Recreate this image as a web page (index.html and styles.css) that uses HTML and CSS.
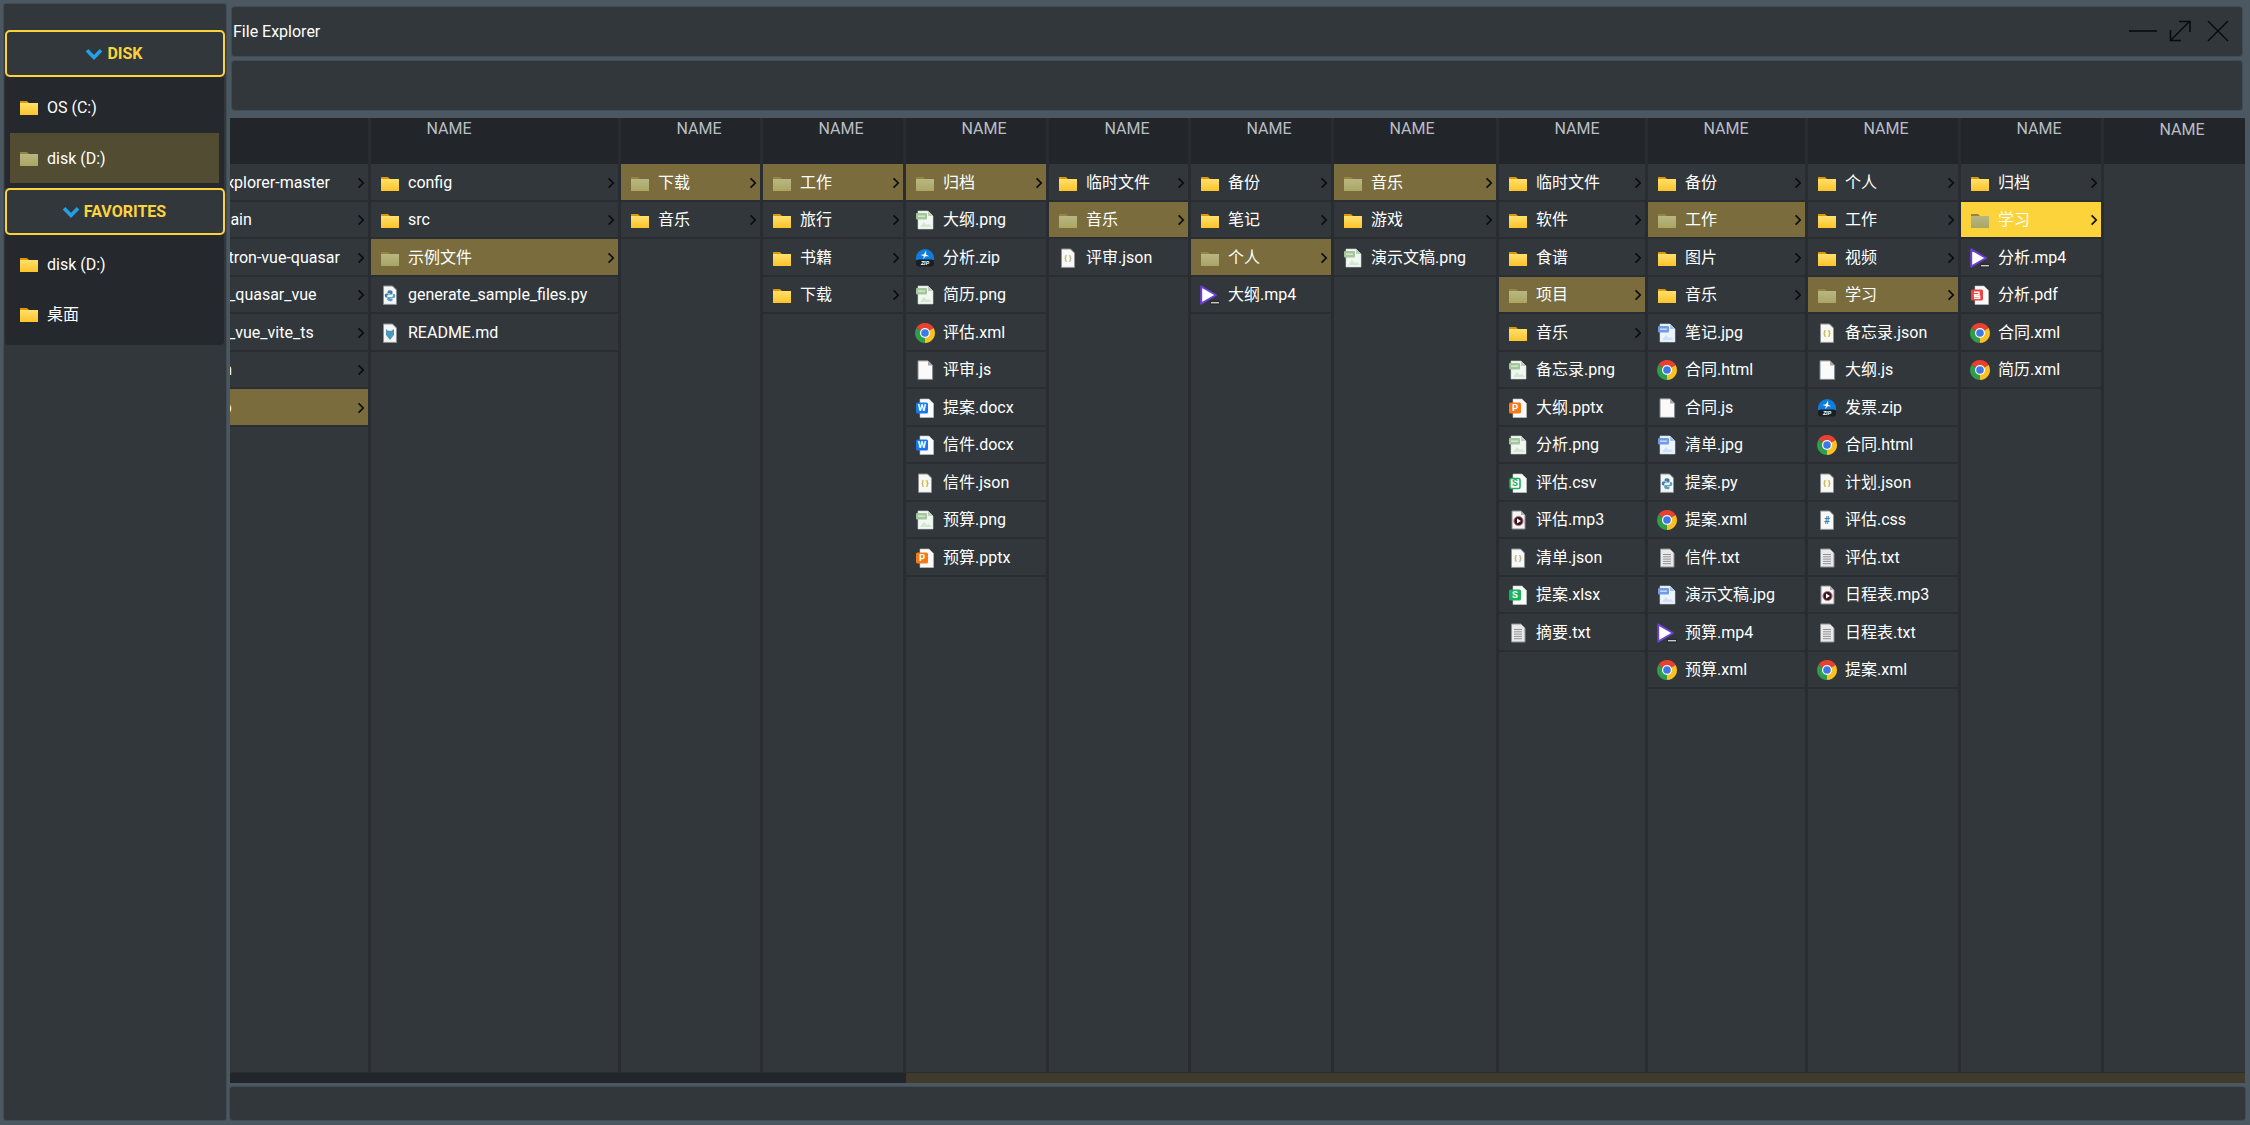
FILE: index.html
```html
<!DOCTYPE html>
<html lang="zh">
<head>
<meta charset="utf-8">
<title>File Explorer</title>
<link rel="stylesheet" href="styles.css">
</head>
<body>
<svg class="defs" aria-hidden="true">
  <defs>
    <linearGradient id="g-folder" x1="0" y1="0" x2="0" y2="1"><stop offset="0" stop-color="#ffe16a"/><stop offset="1" stop-color="#fcc32b"/></linearGradient>
    <linearGradient id="g-dim" x1="0" y1="0" x2="0" y2="1"><stop offset="0" stop-color="#b9b685"/><stop offset="1" stop-color="#a9a662"/></linearGradient>
    <symbol id="i-folder" viewBox="0 0 20 20"><path d="M1 4h7l2 2v3H1z" fill="#df960c"/><rect x="1" y="6" width="18" height="12" fill="url(#g-folder)"/></symbol>
    <symbol id="i-folder-dim" viewBox="0 0 20 20"><path d="M1 4h7l2 2v3H1z" fill="#94873c"/><rect x="1" y="6" width="18" height="12" fill="url(#g-dim)"/></symbol>
    <symbol id="i-chev" viewBox="0 0 8 12"><path d="M1.600 1.400 6.200 6 1.600 10.600" fill="none" stroke="#0c0c0c" stroke-width="1.700"/></symbol>
    <symbol id="i-blue-chev" viewBox="0 0 18 12"><path d="M2 2.200 9 9.400 16 2.200" fill="none" stroke="#22a1e6" stroke-width="3.600"/></symbol>
    <symbol id="i-png" viewBox="0 0 20 20"><path d="M3 1h10l5 5v13H3z" fill="#f1f7f1" stroke="#c9d6c9" stroke-width=".6"/><path d="M13 1v5h5z" fill="#bcd3b8"/><rect x="1" y="3" width="11" height="6.500" rx="1" fill="#a3c69d"/><rect x="3" y="5.400" width="7" height="1.600" fill="#d2e4cf"/><path d="M5 17l4-5 3 3 2-1 3 3z" fill="#d4e7d5"/></symbol>
    <symbol id="i-jpg" viewBox="0 0 20 20"><path d="M3 1h10l5 5v13H3z" fill="#eef4fc" stroke="#c7d4e8" stroke-width=".6"/><path d="M13 1v5h5z" fill="#a9c3ee"/><rect x="1" y="3" width="11" height="6.500" rx="1" fill="#6f9ce4"/><rect x="3" y="5.400" width="7" height="1.600" fill="#c2d6f5"/><path d="M5 17l4-5 3 3 2-1 3 3z" fill="#cfe0f8"/></symbol>
    <symbol id="i-zip" viewBox="0 0 20 20"><path d="M1 10a9 9 0 0 1 18 0v2H1z" fill="#0f7ddb"/><rect x="1" y="11.500" width="18" height="7" rx="3" fill="#1c1d20"/><path d="M11 2.500 9 6.300 5.500 7l3.400.9-.7 3.300 2.400-3 3.600.1-3-1.600z" fill="#fff"/><text x="10" y="17" class="t-zip">ZIP</text></symbol>
    <symbol id="i-chrome" viewBox="0 0 20 20"><path d="M10 10 1.340 5A10 10 0 0 1 18.660 5z" fill="#e8412f"/><path d="M10 10 18.660 5A10 10 0 0 1 10 20z" fill="#fbc022"/><path d="M10 10 10 20A10 10 0 0 1 1.340 5z" fill="#2f9d4a"/><circle cx="10" cy="10" r="5" fill="#fff"/><circle cx="10" cy="10" r="3.800" fill="#3c78e6"/></symbol>
    <symbol id="i-blank" viewBox="0 0 20 20"><path d="M3 .8h10l4.600 4.600v14H3z" fill="#fafafa" stroke="#85888b"/><path d="M13 .8v4.600h4.600z" fill="#a8a8a8"/></symbol>
    <symbol id="i-docx" viewBox="0 0 20 20"><path d="M5 1h9l4.500 4.500V19.500H5z" fill="#fafbfd" stroke="#b9c3d2" stroke-width=".6"/><rect x="1" y="4.500" width="12" height="11" rx="1.600" fill="#1a78ee"/><text x="7" y="13.200" class="t-sq">W</text></symbol>
    <symbol id="i-pptx" viewBox="0 0 20 20"><path d="M5 1h9l4.500 4.500V19.500H5z" fill="#fafafa" stroke="#c8c2bd" stroke-width=".6"/><rect x="1" y="4.500" width="12" height="11" rx="1.600" fill="#f47b16"/><text x="7" y="13.400" class="t-sq">P</text></symbol>
    <symbol id="i-pdf" viewBox="0 0 20 20"><path d="M5 1h9l4.500 4.500V19.500H5z" fill="#fafafa" stroke="#c8bdbd" stroke-width=".6"/><rect x="1" y="4.500" width="12" height="11" rx="1.600" fill="#ea4540"/><path d="M4 7.200h5v2.400H4.600v1.600h5v2H4" fill="none" stroke="#fff" stroke-width="1.400"/></symbol>
    <symbol id="i-csv" viewBox="0 0 20 20"><path d="M5 1h9l4.500 4.500V19.500H5z" fill="#fafafa" stroke="#bcccc2" stroke-width=".6"/><rect x="2" y="5.500" width="10" height="10" rx="1.400" fill="#fff" stroke="#1fae5d" stroke-width="1.600"/><text x="7" y="13.400" class="t-sq t-green">S</text></symbol>
    <symbol id="i-xlsx" viewBox="0 0 20 20"><path d="M5 1h9l4.500 4.500V19.500H5z" fill="#fafafa" stroke="#bcccc2" stroke-width=".6"/><rect x="1" y="4.500" width="12" height="11" rx="1.600" fill="#19b35c"/><text x="7" y="13.400" class="t-sq">S</text></symbol>
    <symbol id="i-mp3" viewBox="0 0 20 20"><path d="M4 1h9l4 4v14H4z" fill="#f6f6f6" stroke="#8a8c8e"/><path d="M13 1v4h4z" fill="#adadad"/><circle cx="10.500" cy="11" r="4.600" fill="#2b1c22" stroke="#d86a7c" stroke-width="1"/><path d="M9 8.600 13 11 9 13.400z" fill="#fff"/></symbol>
    <symbol id="i-mp4" viewBox="0 0 20 20"><path d="M1.200 1.400 16 10 1.200 18.600z" fill="#fff" stroke="#6b3fd3" stroke-width="2" stroke-linejoin="round"/><rect x="10" y="15.500" width="10" height="4.500" fill="#2a2c30"/><rect x="11" y="17" width="8" height="1.400" fill="#c9c9c9"/></symbol>
    <symbol id="i-txt" viewBox="0 0 20 20"><path d="M3.500 1h9.500l4 4v14H3.500z" fill="#e9e9e9" stroke="#8c8f92"/><path d="M6 6.500h8M6 8.800h8M6 11.100h8M6 13.400h8M6 15.700h8" stroke="#8f9296" stroke-width="1"/></symbol>
    <symbol id="i-json" viewBox="0 0 20 20"><path d="M3.500 1h9l4 4v14.400h-13z" fill="#f8f8f6" stroke="#8d9092"/><text x="10" y="13.400" class="t-json">{ }</text></symbol>
    <symbol id="i-css" viewBox="0 0 20 20"><path d="M3.500 1h9l4 4v14.400h-13z" fill="#f8f8f8" stroke="#8d9092"/><text x="10" y="14" class="t-css">#</text></symbol>
    <symbol id="i-py" viewBox="0 0 20 20"><path d="M3.500 1h9l4 4v14.400h-13z" fill="#f4f6f7" stroke="#8d9092"/><path d="M10 5.200c-2 0-2.400.8-2.400 1.800v1h2.600v.6H6.400c-1 0-1.600.8-1.600 2s.6 2 1.500 2h1v-1.400c0-.9.7-1.600 1.600-1.600h2.400c.7 0 1.200-.5 1.200-1.200V7c0-1.100-.9-1.800-2.500-1.800z" fill="#3f7ea6"/><path d="M10.200 16.400c2 0 2.400-.8 2.400-1.800v-1H10V13h3.800c1 0 1.500-.8 1.500-2s-.5-2-1.400-2h-1v1.400c0 .9-.7 1.600-1.600 1.600H8.400c-.7 0-1.200.5-1.200 1.200v1c0 1.100.9 1.800 3 1.800z" fill="#5fa0bf"/></symbol>
    <symbol id="i-md" viewBox="0 0 20 20"><path d="M3.500 1h9l4 4v14.400h-13z" fill="#f4f6f7" stroke="#8d9092"/><path d="M6 6l2 1.800h3.500L14 6v6l-4 5-4-5z" fill="#4f94bd"/></symbol>
  </defs>
</svg>

<div class="app">
  <aside class="side">
    <button class="group" type="button"><svg class="group-chev"><use href="#i-blue-chev"/></svg><span>DISK</span></button>
    <div class="places">
      <div class="place"><svg class="ico"><use href="#i-folder"/></svg><span class="place-name">OS (C:)</span></div>
      <div class="place on"><svg class="ico"><use href="#i-folder-dim"/></svg><span class="place-name">disk (D:)</span></div>
    </div>
    <button class="group" type="button"><svg class="group-chev"><use href="#i-blue-chev"/></svg><span>FAVORITES</span></button>
    <div class="places last">
      <div class="place"><svg class="ico"><use href="#i-folder"/></svg><span class="place-name">disk (D:)</span></div>
      <div class="place"><svg class="ico"><use href="#i-folder"/></svg><span class="place-name">桌面</span></div>
    </div>
  </aside>

  <main class="main">
    <header class="titlebar">
      <span class="title">File Explorer</span>
      <div class="winbtns">
        <svg class="win win-min" viewBox="0 0 28 22"><path d="M0 11h28"/></svg>
        <svg class="win" viewBox="0 0 22 22"><path d="M1 21 21 1M10 1.500h11V12M1.500 10V20.500H12"/></svg>
        <svg class="win win-close" viewBox="0 0 22 22"><path d="M1 1 21 21M21 1 1 21"/></svg>
      </div>
    </header>
    <div class="toolbar"></div>

    <section class="browser">
      <div class="col first">
        <div class="head"></div>
        <div class="list">
          <div class="row"><svg class="ico"><use href="#i-folder"/></svg><span class="name">file-explorer-master</span><svg class="chev"><use href="#i-chev"/></svg></div>
          <div class="row"><svg class="ico"><use href="#i-folder"/></svg><span class="name">wx-main</span><svg class="chev"><use href="#i-chev"/></svg></div>
          <div class="row"><svg class="ico"><use href="#i-folder"/></svg><span class="name">_electron-vue-quasar</span><svg class="chev"><use href="#i-chev"/></svg></div>
          <div class="row"><svg class="ico"><use href="#i-folder"/></svg><span class="name">react_quasar_vue</span><svg class="chev"><use href="#i-chev"/></svg></div>
          <div class="row"><svg class="ico"><use href="#i-folder"/></svg><span class="name">react_vue_vite_ts</span><svg class="chev"><use href="#i-chev"/></svg></div>
          <div class="row"><svg class="ico"><use href="#i-folder"/></svg><span class="name">green</span><svg class="chev"><use href="#i-chev"/></svg></div>
          <div class="row sel"><svg class="ico"><use href="#i-folder-dim"/></svg><span class="name">setup</span><svg class="chev"><use href="#i-chev"/></svg></div>
        </div>
      </div>

      <div class="col">
        <div class="head"><span class="label">NAME</span></div>
        <div class="list">
          <div class="row"><svg class="ico"><use href="#i-folder"/></svg><span class="name">config</span><svg class="chev"><use href="#i-chev"/></svg></div>
          <div class="row"><svg class="ico"><use href="#i-folder"/></svg><span class="name">src</span><svg class="chev"><use href="#i-chev"/></svg></div>
          <div class="row sel"><svg class="ico"><use href="#i-folder-dim"/></svg><span class="name">示例文件</span><svg class="chev"><use href="#i-chev"/></svg></div>
          <div class="row"><svg class="ico"><use href="#i-py"/></svg><span class="name">generate_sample_files.py</span></div>
          <div class="row"><svg class="ico"><use href="#i-md"/></svg><span class="name">README.md</span></div>
        </div>
      </div>

      <div class="col">
        <div class="head"><span class="label">NAME</span></div>
        <div class="list">
          <div class="row sel"><svg class="ico"><use href="#i-folder-dim"/></svg><span class="name">下载</span><svg class="chev"><use href="#i-chev"/></svg></div>
          <div class="row"><svg class="ico"><use href="#i-folder"/></svg><span class="name">音乐</span><svg class="chev"><use href="#i-chev"/></svg></div>
        </div>
      </div>

      <div class="col">
        <div class="head"><span class="label">NAME</span></div>
        <div class="list">
          <div class="row sel"><svg class="ico"><use href="#i-folder-dim"/></svg><span class="name">工作</span><svg class="chev"><use href="#i-chev"/></svg></div>
          <div class="row"><svg class="ico"><use href="#i-folder"/></svg><span class="name">旅行</span><svg class="chev"><use href="#i-chev"/></svg></div>
          <div class="row"><svg class="ico"><use href="#i-folder"/></svg><span class="name">书籍</span><svg class="chev"><use href="#i-chev"/></svg></div>
          <div class="row"><svg class="ico"><use href="#i-folder"/></svg><span class="name">下载</span><svg class="chev"><use href="#i-chev"/></svg></div>
        </div>
      </div>

      <div class="col">
        <div class="head"><span class="label">NAME</span></div>
        <div class="list">
          <div class="row sel"><svg class="ico"><use href="#i-folder-dim"/></svg><span class="name">归档</span><svg class="chev"><use href="#i-chev"/></svg></div>
          <div class="row"><svg class="ico"><use href="#i-png"/></svg><span class="name">大纲.png</span></div>
          <div class="row"><svg class="ico"><use href="#i-zip"/></svg><span class="name">分析.zip</span></div>
          <div class="row"><svg class="ico"><use href="#i-png"/></svg><span class="name">简历.png</span></div>
          <div class="row"><svg class="ico"><use href="#i-chrome"/></svg><span class="name">评估.xml</span></div>
          <div class="row"><svg class="ico"><use href="#i-blank"/></svg><span class="name">评审.js</span></div>
          <div class="row"><svg class="ico"><use href="#i-docx"/></svg><span class="name">提案.docx</span></div>
          <div class="row"><svg class="ico"><use href="#i-docx"/></svg><span class="name">信件.docx</span></div>
          <div class="row"><svg class="ico"><use href="#i-json"/></svg><span class="name">信件.json</span></div>
          <div class="row"><svg class="ico"><use href="#i-png"/></svg><span class="name">预算.png</span></div>
          <div class="row"><svg class="ico"><use href="#i-pptx"/></svg><span class="name">预算.pptx</span></div>
        </div>
      </div>

      <div class="col">
        <div class="head"><span class="label">NAME</span></div>
        <div class="list">
          <div class="row"><svg class="ico"><use href="#i-folder"/></svg><span class="name">临时文件</span><svg class="chev"><use href="#i-chev"/></svg></div>
          <div class="row sel"><svg class="ico"><use href="#i-folder-dim"/></svg><span class="name">音乐</span><svg class="chev"><use href="#i-chev"/></svg></div>
          <div class="row"><svg class="ico"><use href="#i-json"/></svg><span class="name">评审.json</span></div>
        </div>
      </div>

      <div class="col">
        <div class="head"><span class="label">NAME</span></div>
        <div class="list">
          <div class="row"><svg class="ico"><use href="#i-folder"/></svg><span class="name">备份</span><svg class="chev"><use href="#i-chev"/></svg></div>
          <div class="row"><svg class="ico"><use href="#i-folder"/></svg><span class="name">笔记</span><svg class="chev"><use href="#i-chev"/></svg></div>
          <div class="row sel"><svg class="ico"><use href="#i-folder-dim"/></svg><span class="name">个人</span><svg class="chev"><use href="#i-chev"/></svg></div>
          <div class="row"><svg class="ico"><use href="#i-mp4"/></svg><span class="name">大纲.mp4</span></div>
        </div>
      </div>

      <div class="col">
        <div class="head"><span class="label">NAME</span></div>
        <div class="list">
          <div class="row sel"><svg class="ico"><use href="#i-folder-dim"/></svg><span class="name">音乐</span><svg class="chev"><use href="#i-chev"/></svg></div>
          <div class="row"><svg class="ico"><use href="#i-folder"/></svg><span class="name">游戏</span><svg class="chev"><use href="#i-chev"/></svg></div>
          <div class="row"><svg class="ico"><use href="#i-png"/></svg><span class="name">演示文稿.png</span></div>
        </div>
      </div>

      <div class="col">
        <div class="head"><span class="label">NAME</span></div>
        <div class="list">
          <div class="row"><svg class="ico"><use href="#i-folder"/></svg><span class="name">临时文件</span><svg class="chev"><use href="#i-chev"/></svg></div>
          <div class="row"><svg class="ico"><use href="#i-folder"/></svg><span class="name">软件</span><svg class="chev"><use href="#i-chev"/></svg></div>
          <div class="row"><svg class="ico"><use href="#i-folder"/></svg><span class="name">食谱</span><svg class="chev"><use href="#i-chev"/></svg></div>
          <div class="row sel"><svg class="ico"><use href="#i-folder-dim"/></svg><span class="name">项目</span><svg class="chev"><use href="#i-chev"/></svg></div>
          <div class="row"><svg class="ico"><use href="#i-folder"/></svg><span class="name">音乐</span><svg class="chev"><use href="#i-chev"/></svg></div>
          <div class="row"><svg class="ico"><use href="#i-png"/></svg><span class="name">备忘录.png</span></div>
          <div class="row"><svg class="ico"><use href="#i-pptx"/></svg><span class="name">大纲.pptx</span></div>
          <div class="row"><svg class="ico"><use href="#i-png"/></svg><span class="name">分析.png</span></div>
          <div class="row"><svg class="ico"><use href="#i-csv"/></svg><span class="name">评估.csv</span></div>
          <div class="row"><svg class="ico"><use href="#i-mp3"/></svg><span class="name">评估.mp3</span></div>
          <div class="row"><svg class="ico"><use href="#i-json"/></svg><span class="name">清单.json</span></div>
          <div class="row"><svg class="ico"><use href="#i-xlsx"/></svg><span class="name">提案.xlsx</span></div>
          <div class="row"><svg class="ico"><use href="#i-txt"/></svg><span class="name">摘要.txt</span></div>
        </div>
      </div>

      <div class="col">
        <div class="head"><span class="label">NAME</span></div>
        <div class="list">
          <div class="row"><svg class="ico"><use href="#i-folder"/></svg><span class="name">备份</span><svg class="chev"><use href="#i-chev"/></svg></div>
          <div class="row sel"><svg class="ico"><use href="#i-folder-dim"/></svg><span class="name">工作</span><svg class="chev"><use href="#i-chev"/></svg></div>
          <div class="row"><svg class="ico"><use href="#i-folder"/></svg><span class="name">图片</span><svg class="chev"><use href="#i-chev"/></svg></div>
          <div class="row"><svg class="ico"><use href="#i-folder"/></svg><span class="name">音乐</span><svg class="chev"><use href="#i-chev"/></svg></div>
          <div class="row"><svg class="ico"><use href="#i-jpg"/></svg><span class="name">笔记.jpg</span></div>
          <div class="row"><svg class="ico"><use href="#i-chrome"/></svg><span class="name">合同.html</span></div>
          <div class="row"><svg class="ico"><use href="#i-blank"/></svg><span class="name">合同.js</span></div>
          <div class="row"><svg class="ico"><use href="#i-jpg"/></svg><span class="name">清单.jpg</span></div>
          <div class="row"><svg class="ico"><use href="#i-py"/></svg><span class="name">提案.py</span></div>
          <div class="row"><svg class="ico"><use href="#i-chrome"/></svg><span class="name">提案.xml</span></div>
          <div class="row"><svg class="ico"><use href="#i-txt"/></svg><span class="name">信件.txt</span></div>
          <div class="row"><svg class="ico"><use href="#i-jpg"/></svg><span class="name">演示文稿.jpg</span></div>
          <div class="row"><svg class="ico"><use href="#i-mp4"/></svg><span class="name">预算.mp4</span></div>
          <div class="row"><svg class="ico"><use href="#i-chrome"/></svg><span class="name">预算.xml</span></div>
        </div>
      </div>

      <div class="col">
        <div class="head"><span class="label">NAME</span></div>
        <div class="list">
          <div class="row"><svg class="ico"><use href="#i-folder"/></svg><span class="name">个人</span><svg class="chev"><use href="#i-chev"/></svg></div>
          <div class="row"><svg class="ico"><use href="#i-folder"/></svg><span class="name">工作</span><svg class="chev"><use href="#i-chev"/></svg></div>
          <div class="row"><svg class="ico"><use href="#i-folder"/></svg><span class="name">视频</span><svg class="chev"><use href="#i-chev"/></svg></div>
          <div class="row sel"><svg class="ico"><use href="#i-folder-dim"/></svg><span class="name">学习</span><svg class="chev"><use href="#i-chev"/></svg></div>
          <div class="row"><svg class="ico"><use href="#i-json"/></svg><span class="name">备忘录.json</span></div>
          <div class="row"><svg class="ico"><use href="#i-blank"/></svg><span class="name">大纲.js</span></div>
          <div class="row"><svg class="ico"><use href="#i-zip"/></svg><span class="name">发票.zip</span></div>
          <div class="row"><svg class="ico"><use href="#i-chrome"/></svg><span class="name">合同.html</span></div>
          <div class="row"><svg class="ico"><use href="#i-json"/></svg><span class="name">计划.json</span></div>
          <div class="row"><svg class="ico"><use href="#i-css"/></svg><span class="name">评估.css</span></div>
          <div class="row"><svg class="ico"><use href="#i-txt"/></svg><span class="name">评估.txt</span></div>
          <div class="row"><svg class="ico"><use href="#i-mp3"/></svg><span class="name">日程表.mp3</span></div>
          <div class="row"><svg class="ico"><use href="#i-txt"/></svg><span class="name">日程表.txt</span></div>
          <div class="row"><svg class="ico"><use href="#i-chrome"/></svg><span class="name">提案.xml</span></div>
        </div>
      </div>

      <div class="col">
        <div class="head"><span class="label">NAME</span></div>
        <div class="list">
          <div class="row"><svg class="ico"><use href="#i-folder"/></svg><span class="name">归档</span><svg class="chev"><use href="#i-chev"/></svg></div>
          <div class="row current"><svg class="ico"><use href="#i-folder-dim"/></svg><span class="name">学习</span><svg class="chev"><use href="#i-chev"/></svg></div>
          <div class="row"><svg class="ico"><use href="#i-mp4"/></svg><span class="name">分析.mp4</span></div>
          <div class="row"><svg class="ico"><use href="#i-pdf"/></svg><span class="name">分析.pdf</span></div>
          <div class="row"><svg class="ico"><use href="#i-chrome"/></svg><span class="name">合同.xml</span></div>
          <div class="row"><svg class="ico"><use href="#i-chrome"/></svg><span class="name">简历.xml</span></div>
        </div>
      </div>

      <div class="col">
        <div class="head"><span class="label">NAME</span></div>
        <div class="list"></div>
      </div>
    </section>

    <div class="hscroll"><div class="thumb"></div></div>
    <footer class="statusbar"></footer>
  </main>
</div>
</body>
</html>
```

FILE: styles.css
```css
* { box-sizing: border-box; }

html, body { margin: 0; height: 100%; }

body {
  background: #4b5862;
  color: #fff;
  font-family: Roboto, "Noto Sans CJK SC", sans-serif;
  font-size: 16px;
  overflow: hidden;
}

.defs { position: absolute; width: 0; height: 0; }

.app {
  display: flex;
  height: 1125px;
  padding: 4px 5px 5px 4px;
}

/* Sidebar */
.side {
  flex: 0 0 222px;
  margin-right: 4px;
  padding: 26px 1px 0;
  background: #32373c;
  border-radius: 2px;
  box-shadow: 0 0 0 1px #414c56;
}

.group {
  display: flex;
  align-items: center;
  justify-content: center;
  gap: 4px;
  width: 100%;
  height: 47px;
  padding: 0 2px 0 0;
  background: #32373c;
  border: 2px solid #fdd33c;
  border-radius: 5px;
  color: #fdd33c;
  font: 700 16px Roboto, sans-serif;
}

.group-chev { width: 18px; height: 12px; }

.places {
  display: flex;
  flex-direction: column;
  gap: 1px;
  padding: 5px;
  margin-right: 1px;
  background: #25282d;
}

.places.last {
  gap: 0;
  padding: 4px 5px 6px;
  border-radius: 0 0 4px 4px;
}

.place {
  display: flex;
  align-items: center;
  gap: 8px;
  height: 50px;
  padding-left: 9px;
}

.place.on { background: #524c33; }

.place-name { line-height: 20px; margin-top: 1px; }

.ico { flex: none; width: 20px; height: 20px; }

/* Labels inside file-type icons */
.t-zip, .t-sq, .t-json, .t-css {
  font-family: Roboto, sans-serif;
  font-weight: 700;
  text-anchor: middle;
}

.t-zip { font-size: 5.5px; font-style: italic; fill: #fff; }
.t-sq { font-size: 9.5px; fill: #fff; }
.t-green { fill: #1fae5d; }
.t-json { font-size: 8px; fill: #ada73c; }
.t-css { font-size: 10px; fill: #3f7ea6; }

/* Right-hand side */
.main {
  flex: 1;
  min-width: 0;
  display: flex;
  flex-direction: column;
}

.titlebar {
  display: flex;
  align-items: center;
  justify-content: space-between;
  flex: 0 0 49px;
  margin: 3px 3px 5px 2px;
  padding-left: 1px;
  background: #32373c;
  border-radius: 3px;
  box-shadow: 0 0 0 1px #414c56;
}

.title { font-size: 16px; }

.winbtns {
  display: flex;
  align-items: center;
  gap: 12px;
  margin: -1px 13px 0 0;
}

.win { width: 22px; height: 22px; fill: none; stroke: #0b0b0b; stroke-width: 1.6; }
.win-min { width: 28px; }
.win-close { margin-left: 4px; }

.toolbar {
  flex: 0 0 49px;
  margin: 0 3px 8px 2px;
  background: #32373c;
  border-radius: 3px;
  box-shadow: 0 0 0 1px #414c56;
}

/* Miller columns */
.browser {
  flex: 1;
  min-height: 0;
  display: grid;
  grid-template-columns: 141px 250px 142px 143px 143px 142px 143px 165px 149px 160px 153px 143px 141px;
  background: #2a2e33;
  border-bottom: 1px solid #2a2e33;
}

.col {
  min-width: 0;
  display: flex;
  flex-direction: column;
  padding-right: 3px;
  background: #292c31;
}

.col:last-child { padding-right: 0; }

.head {
  flex: 0 0 46px;
  padding-top: 1px;
  background: #22262a;
  overflow: hidden;
}

.col:last-child .head { padding-top: 2px; }

.label {
  display: block;
  width: 156px;
  text-align: center;
  color: #b9bfc5;
  white-space: nowrap;
}

.list {
  flex: 1;
  background: #32373c;
  overflow: hidden;
}

.first .row { margin-left: -75px; width: calc(100% + 75px); }

.row {
  display: flex;
  align-items: center;
  gap: 8px;
  height: 37.5px;
  padding: 2px 3px 0 9px;
  border-bottom: 2px solid #2a2e33;
  background-clip: padding-box;
}

.row.sel { background-color: #7a6c3d; }
.row.current { background-color: #fdd33c; }

.name {
  flex: 1;
  min-width: 0;
  line-height: 20px;
  white-space: nowrap;
}

.chev { flex: none; width: 8px; height: 12px; }

.hscroll {
  flex: 0 0 10px;
  background: #3f3a2b;
  margin-bottom: 4px;
}

.thumb { width: 676px; height: 100%; background: #22262a; }

.statusbar {
  flex: 0 0 33px;
  background: #32373c;
  border-radius: 3px;
  box-shadow: 0 0 0 1px #414c56;
}
```
